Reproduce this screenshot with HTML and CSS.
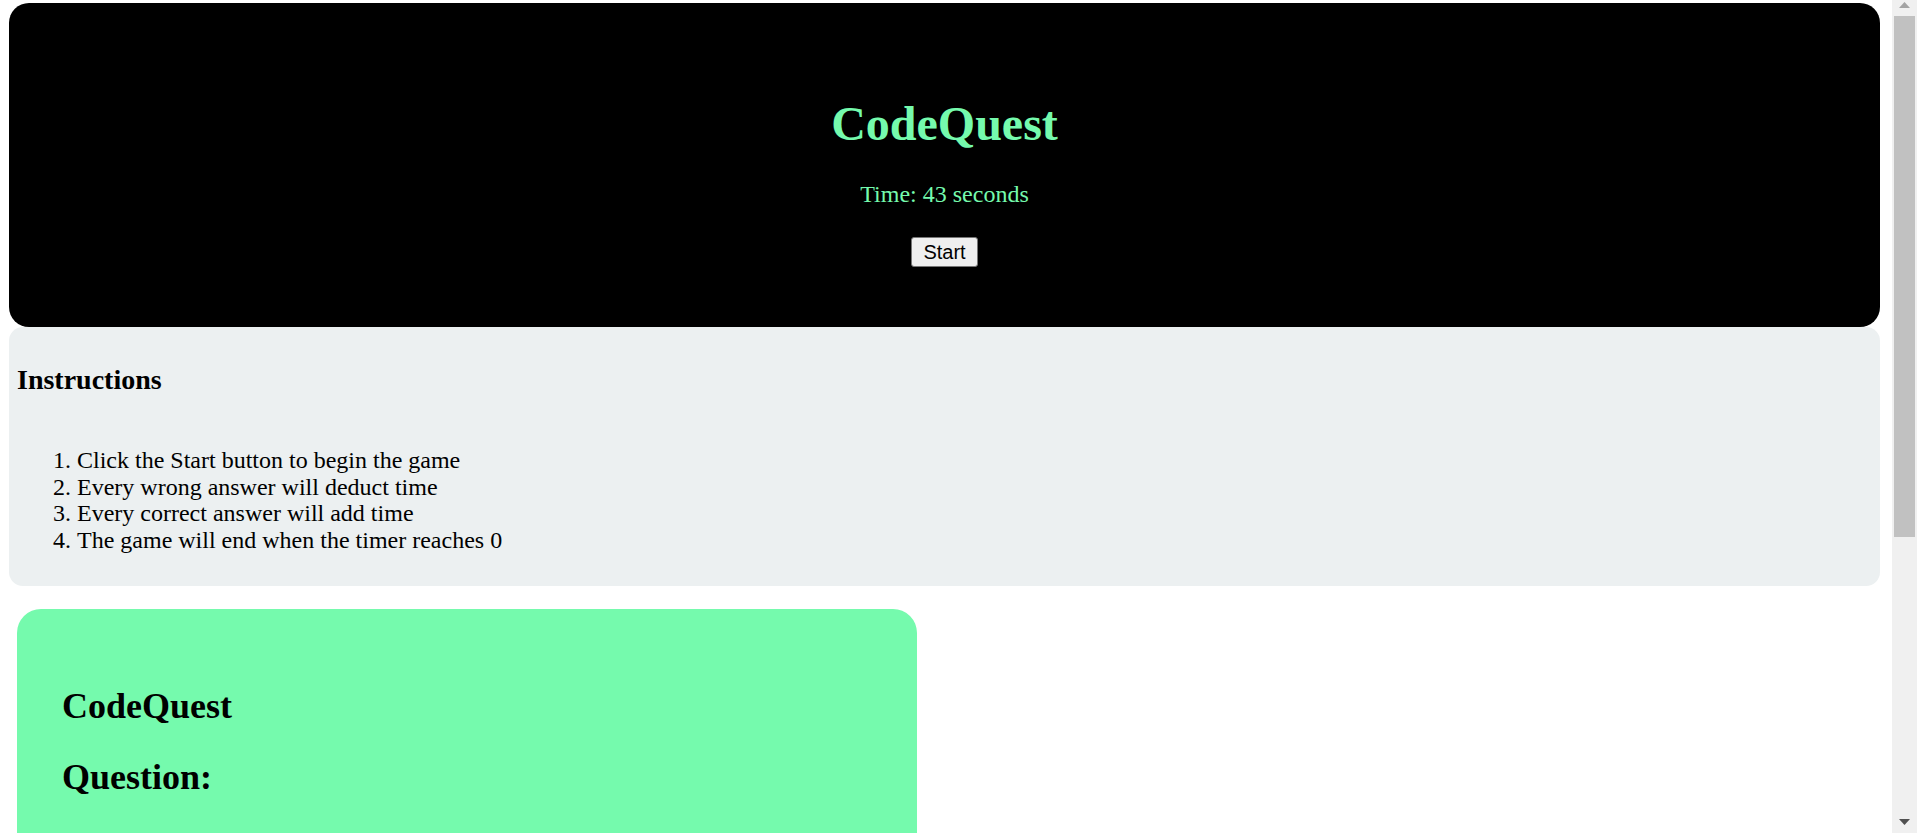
FILE: index.html
```html
<!DOCTYPE html>
<html lang="en">
<head>
<meta charset="utf-8">
<title>CodeQuest</title>
<link rel="stylesheet" href="styles.css">
</head>
<body>
  <header class="hero">
    <h1 class="hero-title">CodeQuest</h1>
    <p class="hero-time">Time: <span class="time-value">43</span> seconds</p>
    <button class="start-btn" type="button">Start</button>
  </header>

  <section class="instructions">
    <h3 class="instructions-title">Instructions</h3>
    <ol class="instructions-list">
      <li>Click the Start button to begin the game</li>
      <li>Every wrong answer will deduct time</li>
      <li>Every correct answer will add time</li>
      <li>The game will end when the timer reaches 0</li>
    </ol>
  </section>

  <main class="quiz">
    <h2 class="quiz-heading">CodeQuest</h2>
    <h2 class="quiz-heading">Question:</h2>
  </main>

  <div class="scrollbar" aria-hidden="true">
    <div class="scroll-arrow">
      <svg width="11" height="6" viewBox="0 0 11 6"><polygon points="5.5,0 11,6 0,6" fill="#a3a3a3"/></svg>
    </div>
    <div class="scroll-thumb"></div>
    <div class="scroll-rest"></div>
    <div class="scroll-arrow scroll-arrow-down">
      <svg width="11" height="6" viewBox="0 0 11 6"><polygon points="0,0 11,0 5.5,6" fill="#505050"/></svg>
    </div>
  </div>
</body>
</html>
```

FILE: styles.css
```css
html {
  background: #ffffff;
}

body {
  margin: 3px 37px 8px 9px;
  font-family: "Liberation Serif", "Times New Roman", serif;
  color: #000000;
}

/* header */
.hero {
  background: #000000;
  border-radius: 20px;
  padding: 93px 0 60px;
  display: flex;
  flex-direction: column;
  align-items: center;
  text-align: center;
}

.hero-title {
  margin: 0;
  font-size: 48px;
  line-height: 55px;
  font-weight: bold;
  color: #75faad;
}

.hero-time {
  margin: 29px 0 0;
  font-size: 24px;
  line-height: 28px;
  color: #75faad;
}

.start-btn {
  margin-top: 29px;
  font-family: "Liberation Sans", Arial, sans-serif;
  font-size: 20px;
  line-height: 22px;
  padding: 3px 11px;
  color: #000000;
  background: #efefef;
  border: 1px solid #767676;
  border-radius: 3px;
}

/* instructions */
.instructions {
  background: #ecf0f1;
  border-radius: 14px;
  padding: 37px 8px 32px;
}

.instructions-title {
  margin: 0;
  font-size: 28px;
  line-height: 31px;
  font-weight: bold;
}

.instructions-list {
  margin: 52px 0 0;
  padding-left: 60px;
  font-size: 24px;
  line-height: 26.67px;
}

/* quiz card */
.quiz {
  width: 810px;
  min-height: 580px;
  margin: 23px 0 0 8px;
  padding: 47px 45px 45px;
  background: #75faad;
  border-radius: 24px;
}

.quiz-heading {
  margin: 30px 0;
  font-size: 36px;
  line-height: 41px;
  font-weight: bold;
}

/* window scrollbar (drawn, as in the screenshot) */
.scrollbar {
  position: fixed;
  top: 0;
  right: 0;
  bottom: 0;
  width: 25px;
  background: #f0f0f0;
  display: flex;
  flex-direction: column;
}

.scroll-arrow {
  height: 16px;
  display: flex;
  justify-content: center;
  align-items: flex-start;
  padding-top: 2px;
  box-sizing: border-box;
}

.scroll-arrow-down {
  align-items: flex-end;
  padding: 0 0 8px;
  height: 16px;
}

.scroll-thumb {
  height: 521px;
  margin: 0 2px;
  background: #c1c1c1;
}

.scroll-rest {
  flex: 1;
}
```
